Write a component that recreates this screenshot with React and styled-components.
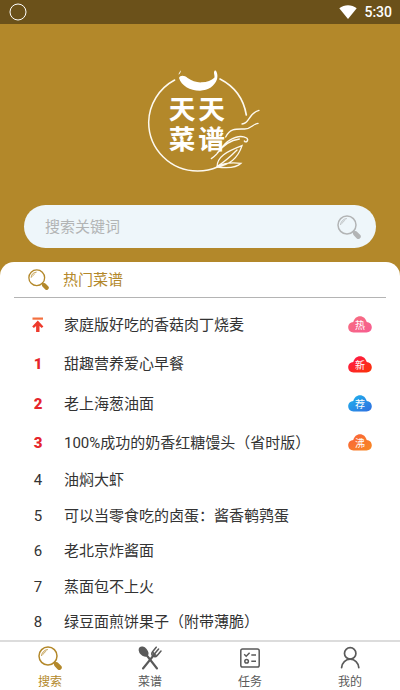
import { useState } from "react";
import styled, { createGlobalStyle } from "styled-components";

const GlobalStyle = createGlobalStyle`
  *,
  *::before,
  *::after {
    box-sizing: border-box;
  }

  body {
    margin: 0;
    background: #b3882a;
    color: #333;
    font-family: Roboto, "Noto Sans CJK SC", sans-serif;
    font-size: 15px;
  }

  button,
  input {
    font: inherit;
  }
`;

const Page = styled.div`
  display: flex;
  flex-direction: column;
  min-height: 100vh;
`;

const StatusBar = styled.div`
  display: flex;
  align-items: center;
  gap: 7px;
  height: 24px;
  padding: 0 8px 0 9px;
  background: #6b511a;
  color: #fff;
`;

const Clock = styled.time`
  font-size: 14px;
  font-weight: 500;
  line-height: 24px;
`;

const Spacer = styled.span`
  flex: 1;
`;

const Hero = styled.header`
  display: flex;
  flex-direction: column;
  align-items: center;
  gap: 31px;
  padding: 44px 24px 14px;
`;

const LogoText = styled.text`
  font-family: "Noto Sans CJK SC", sans-serif;
  font-size: 80px;
  font-weight: 700;
  fill: #fff;
  stroke: none;
`;

const SearchBox = styled.form`
  display: flex;
  align-items: center;
  width: 100%;
  height: 43px;
  padding: 0 15px 0 21px;
  border-radius: 22px;
  background: #eef6fa;
`;

const SearchInput = styled.input`
  flex: 1;
  min-width: 0;
  padding: 0;
  border: 0;
  outline: 0;
  background: transparent;
  color: #333;

  &::placeholder {
    color: #b2b4b5;
    opacity: 1;
  }
`;

const IconButton = styled.button`
  display: flex;
  padding: 0;
  border: 0;
  background: none;
  color: #b2b4b5;
  cursor: pointer;
`;

const Sheet = styled.main`
  flex: 1;
  display: flex;
  flex-direction: column;
  border-radius: 14px 14px 0 0;
  background: #fff;
`;

const SheetHeader = styled.div`
  display: flex;
  align-items: center;
  gap: 14px;
  height: 36px;
  margin: 0 14px;
  padding-left: 14px;
  border-bottom: 1px solid #b4b4b4;
  color: #b3882a;
`;

const SheetTitle = styled.h1`
  margin: 0;
  font-size: 15px;
  font-weight: 400;
  line-height: 20px;
`;

const List = styled.ol`
  flex: 1;
  display: flex;
  flex-direction: column;
  margin: 0;
  padding: 7px 28px 0 24px;
  list-style: none;
`;

// Rows with a badge are slightly taller than the plain ones
const Row = styled.li`
  flex: ${(props) => (props.$tall ? 10 : 9)} 0 0;
  display: flex;
  align-items: center;
  gap: 12px;
  min-height: 32px;
`;

const Rank = styled.span`
  display: flex;
  justify-content: center;
  width: 28px;
  color: ${(props) => (props.$top ? "#e5252b" : "#333")};
  font-weight: ${(props) => (props.$top ? 900 : 400)};
`;

const RecipeLink = styled.a`
  flex: 1;
  min-width: 0;
  color: inherit;
  line-height: 20px;
  text-decoration: none;
`;

const BadgeText = styled.text`
  font-family: "Noto Sans CJK SC", sans-serif;
  font-size: 10px;
  fill: #fff;
`;

const TabBar = styled.nav`
  display: flex;
  height: 50px;
  border-top: 2px solid #dcdcdc;
  background: #fff;
`;

const Tab = styled.button`
  flex: 1;
  display: flex;
  flex-direction: column;
  align-items: center;
  gap: 4px;
  padding: 4px 0 0;
  border: 0;
  background: none;
  color: ${(props) => (props.$active ? "#b3882a" : "#5a5a5a")};
  font-size: 12px;
  line-height: 16px;
  cursor: pointer;
`;

const Magnifier = ({ size = 24 }) => (
  <svg width={size} height={size} viewBox="0 0 24 24" fill="none" stroke="currentColor" strokeLinecap="round" aria-hidden="true">
    <circle cx="10" cy="10" r="9" strokeWidth="1.5" />
    <path d="M3.6 9.6A6.4 6.4 0 0 1 9.4 3.6" strokeWidth="0.9" />
    <path d="M5.2 8.2A5.4 5.4 0 0 1 7.8 5.4" strokeWidth="0.7" />
    <path d="M16.5 16.5l2 2" strokeWidth="2.2" />
    <path d="M18.5 18.6l2.8 2.9" strokeWidth="4.9" />
  </svg>
);

const Cutlery = () => (
  <svg width="24" height="24" viewBox="0 0 24 24" fill="none" stroke="currentColor" strokeLinecap="round" aria-hidden="true">
    <ellipse cx="5.6" cy="5.6" rx="4" ry="5.9" transform="rotate(-42 5.6 5.6)" fill="currentColor" stroke="none" />
    <path d="M8.5 9L19 22.5" strokeWidth="2.1" />
    <path d="M15.5 9.5L5 22.5" strokeWidth="2.1" />
    <path
      d="M18.2 1.2l-3.6 4.6c-1 1.4-.8 3.2.4 4.1 1.3 1 3.1.8 4.2-.5L23 5"
      strokeWidth="1.5"
    />
    <path d="M20.6 3l-4.2 5" strokeWidth="1.5" />
    <path d="M15.2 6.5c-1 2 .8 3.8 3 3z" fill="currentColor" strokeWidth="1" />
  </svg>
);

const TaskList = () => (
  <svg width="24" height="24" viewBox="0 0 24 24" fill="none" stroke="currentColor" strokeWidth="1.5" aria-hidden="true">
    <rect x="2.8" y="2.9" width="18.4" height="18.2" rx="1.8" />
    <path d="M6.2 8.3l2 1.9 3.4-3.4M13.3 9h4.7M13.3 15.3h4.7" />
    <circle cx="8.6" cy="15.3" r="1.8" />
  </svg>
);

const Person = () => (
  <svg width="24" height="24" viewBox="0 0 24 24" fill="none" stroke="currentColor" strokeWidth="1.7" strokeLinecap="round" aria-hidden="true">
    <circle cx="12.2" cy="7.4" r="5.7" />
    <path d="M3.6 21.6c.4-5 4-8.4 8.600-8.400s8.200 3.400 8.600 8.400" />
  </svg>
);

const PinnedArrow = () => (
  <svg width="12" height="16" viewBox="0 0 12 16" role="img" aria-label="置顶">
    <rect x="0.5" y="0.5" width="10.5" height="2.2" fill="#f4703f" />
    <path d="M5.8 3.5L11.4 9.5 9.7 11.1 7.5 9.1V15H4.1V9.1L1.9 11.1.2 9.5z" fill="#ee3a2c" />
  </svg>
);

const Badge = ({ id, label, from, to }) => (
  <svg width="24" height="17" viewBox="0 0 24 17" role="img" aria-label={label}>
    <defs>
      <linearGradient id={id} x1="0" y1="0" x2="1" y2="1">
        <stop offset="0" stopColor={from} />
        <stop offset="1" stopColor={to} />
      </linearGradient>
    </defs>
    <path
      d="M5.5 16.5C2.3 16.5.2 14.3.2 11.3.2 8.3 2.4 6.2 5.3 6 6.2 2.6 8.7.3 12 .3s5.8 2.3 6.7 5.7c2.9.2 5.1 2.3 5.1 5.3 0 3-2.1 5.2-5.3 5.2z"
      fill={`url(#${id})`}
    />
    <BadgeText x="12" y="13" textAnchor="middle">
      {label}
    </BadgeText>
  </svg>
);

const Logo = () => (
  <svg width="124" height="106" viewBox="9 24 372 318" fill="none" stroke="#fdf9ef" strokeLinecap="round" role="img" aria-label="天天菜谱">
    <path d="M119 60A147 147 0 0 0 41 186c0 82 66 147 147 147 22 0 42-4 59-12" strokeWidth="4.5" />
    <path d="M255 57c43 22 71 60 79 108" strokeWidth="5" />
    <path
      d="M131 44c4-2 7-8 6-13l-6 10zM132 54c3-9 17-8 26 0 12 9 28 14 42 13 16-1 30-6 38-14 3-6-5-15 2-22 7 3 9 17 6 27-7 20-26 34-51 34-31 0-56-15-63-38z"
      fill="#fff"
      stroke="none"
    />
    <path d="M372 151c-15 4-24 15-32 28-4 7-10 12-19 13M369 190c-16 2-20 17-40 17-24 0-44-3-57 24" strokeWidth="4" />
    <path d="M229 296c28-17 29-41 54-55 18-11 38-15 52-7 7 6-1 17-7 9M247 279c18-24 38-38 66-42" strokeWidth="4" />
    <path d="M246 321c0-31 28-46 75-64-10 31-31 57-75 64zM246 321c23-15 47-14 72-11-15 15-42 15-72 11zM248 318c20-12 38-28 58-48" strokeWidth="4" />
    <LogoText x="101" y="176">天</LogoText>
    <LogoText x="190" y="176">天</LogoText>
    <LogoText x="101" y="268">菜</LogoText>
    <LogoText x="190" y="268">谱</LogoText>
  </svg>
);

const badges = {
  hot: { label: "热", from: "#f76f7f", to: "#f75c91" },
  fresh: { label: "新", from: "#ff174f", to: "#fb3305" },
  pick: { label: "荐", from: "#20b6ed", to: "#2f6de0" },
  boiling: { label: "沸", from: "#fa603a", to: "#f78a23" },
};

const recipes = [
  { title: "家庭版好吃的香菇肉丁烧麦", badge: "hot" },
  { title: "甜趣营养爱心早餐", badge: "fresh" },
  { title: "老上海葱油面", badge: "pick" },
  { title: "100%成功的奶香红糖馒头（省时版）", badge: "boiling" },
  { title: "油焖大虾" },
  { title: "可以当零食吃的卤蛋：酱香鹌鹑蛋" },
  { title: "老北京炸酱面" },
  { title: "蒸面包不上火" },
  { title: "绿豆面煎饼果子（附带薄脆）" },
];

const tabs = [
  { label: "搜索", Icon: Magnifier },
  { label: "菜谱", Icon: Cutlery },
  { label: "任务", Icon: TaskList },
  { label: "我的", Icon: Person },
];

const App = () => {
  const [active, setActive] = useState("搜索");

  return (
    <Page>
      <GlobalStyle />
      <StatusBar>
        <svg width="18" height="18" viewBox="0 0 18 18" fill="none" stroke="#fff" aria-hidden="true">
          <circle cx="9" cy="9" r="8" />
        </svg>
        <Spacer />
        <svg width="18" height="14" viewBox="0 0 18 14" fill="#fff" aria-hidden="true">
          <path d="M9 14L.3 3.3C5.3-.7 12.7-.7 17.7 3.3z" />
        </svg>
        <Clock>5:30</Clock>
      </StatusBar>
      <Hero>
        <Logo />
        <SearchBox role="search" onSubmit={(e) => e.preventDefault()}>
          <SearchInput type="text" placeholder="搜索关键词" aria-label="搜索关键词" />
          <IconButton type="submit" aria-label="搜索">
            <Magnifier />
          </IconButton>
        </SearchBox>
      </Hero>
      <Sheet>
        <SheetHeader>
          <Magnifier size={21} />
          <SheetTitle>热门菜谱</SheetTitle>
        </SheetHeader>
        <List>
          {recipes.map(({ title, badge }, i) => (
            <Row key={title} $tall={Boolean(badge)}>
              <Rank $top={i < 4}>{i === 0 ? <PinnedArrow /> : i}</Rank>
              <RecipeLink href="#">{title}</RecipeLink>
              {badge && <Badge id={badge} {...badges[badge]} />}
            </Row>
          ))}
        </List>
      </Sheet>
      <TabBar>
        {tabs.map(({ label, Icon }) => (
          <Tab key={label} type="button" $active={label === active} onClick={() => setActive(label)}>
            <Icon />
            {label}
          </Tab>
        ))}
      </TabBar>
    </Page>
  );
};

export default App;
